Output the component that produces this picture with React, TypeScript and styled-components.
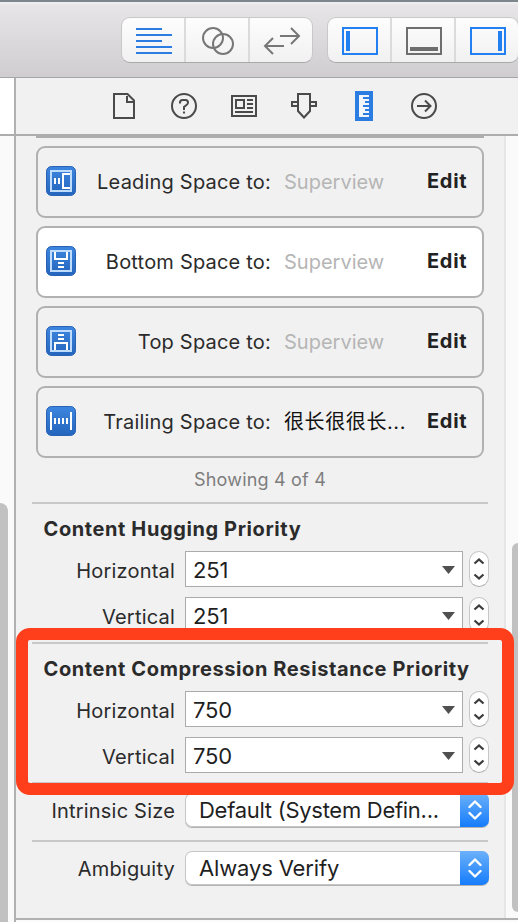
import React from "react";
import styled, { createGlobalStyle } from "styled-components";

const GlobalStyle = createGlobalStyle`
  * { box-sizing: border-box; }
  html, body { margin: 0; padding: 0; overflow: hidden; }
  body { font-family: Inter, "Noto Sans CJK SC", sans-serif; color: #2b2b2b; }
  svg { display: block; flex: none; }
`;

const Window = styled.div`
  position: relative;
  width: 518px;
  height: 922px;
  overflow: hidden;
  display: flex;
  flex-direction: column;
  background: #f1f1f1;
`;

const Toolbar = styled.header`
  height: 78px;
  flex: none;
  display: flex;
  gap: 14px;
  padding: 15px 0 0 121px;
  border-top: 2px solid #7b878d;
  border-bottom: 1px solid #a6a5a7;
  background: linear-gradient(#f3f2f3 0, #e7e5e7 3px, #cfcdd0 100%);
`;

const Segments = styled.div`
  flex: none;
  height: 46px;
  width: 192px;
  display: flex;
  border: 1px solid #c9c8c9;
  border-bottom-color: #aaa9aa;
  border-radius: 9px;
  overflow: hidden;
  background: linear-gradient(#fdfdfd, #f2f1f2);
`;

const Segment = styled.div`
  flex: 1;
  display: flex;
  align-items: center;
  justify-content: center;
  padding: 2px 0 0 2px;
  & + & { border-left: 2px solid #dcdbdc; }
`;

const TabRow = styled.nav`
  height: 58px;
  flex: none;
  display: flex;
  border-bottom: 2px solid #adadad;
`;

const Gutter = styled.div<{ $tone: string }>`
  width: 16px;
  flex: none;
  border-right: 2px solid #b1b1b1;
  background: ${(p) => p.$tone};
`;

const Tabs = styled.div`
  display: flex;
  padding-left: 78px;
`;

const Tab = styled.div`
  width: 60px;
  display: flex;
  align-items: center;
  justify-content: center;
`;

const Body = styled.div`
  flex: 1;
  display: flex;
  min-height: 0;
`;

const Thumb = styled.div<{ $top: number; $height: number; $width: number; $radius: string }>`
  width: ${(p) => p.$width}px;
  height: ${(p) => p.$height}px;
  margin-top: ${(p) => p.$top}px;
  border-radius: ${(p) => p.$radius};
  background: #c1c1c1;
`;

const Main = styled.div`
  flex: 1;
  display: flex;
  flex-direction: column;
`;

const Pane = styled.div`
  height: 784px;
  flex: none;
  display: flex;
  border-bottom: 2px solid #b1b1b1;
`;

const Footer = styled.div`
  flex: 1;
  background: #fbfbfb;
`;

const Inspector = styled.main`
  width: 488px;
  flex: none;
`;

const ScrollTrack = styled.div`
  flex: 1;
  display: flex;
  justify-content: flex-end;
  border-left: 2px solid #e6e6e6;
  background: #fafafa;
`;

const Constraints = styled.section`
  margin-left: 20px;
  width: 448px;
  display: flex;
  flex-direction: column;
  gap: 8px;
  border-top: 2px solid #adadad;
  padding-top: 8px;
`;

const Card = styled.div<{ $selected?: boolean }>`
  height: 72px;
  display: grid;
  grid-template-columns: 30px 195px 131px 1fr;
  align-items: center;
  padding: 0 0 2px 8px;
  border: 2px solid #b1b1b1;
  border-radius: 9px;
  background: ${(p) => (p.$selected ? "#fff" : "#f1f1f1")};
  font-size: 20px;
  line-height: 24px;
  white-space: nowrap;
`;

const Relation = styled.span`
  text-align: right;
  letter-spacing: 0.2px;
  padding-top: 2px;
`;

const Target = styled.span<{ $named?: boolean }>`
  padding: 2px 0 0 13px;
  letter-spacing: ${(p) => (p.$named ? "0.6px" : "0")};
  color: ${(p) => (p.$named ? "#111" : "#b5b5b5")};
`;

const Edit = styled.span`
  padding-left: 25px;
  font-weight: 700;
  color: #222;
  letter-spacing: 0.7px;
`;

const Count = styled.p`
  margin: 0 0 0 16px;
  height: 44px;
  padding-top: 10px;
  width: 456px;
  text-align: center;
  font-size: 18px;
  line-height: 24px;
  letter-spacing: 0.2px;
  color: #7d7d7d;
`;

const Group = styled.section<{ $height: number }>`
  margin-left: 16px;
  width: 457px;
  height: ${(p) => p.$height}px;
`;

const Rule = styled.div`
  height: 2px;
  width: 456px;
  background: #c8c8c8;
`;

const Heading = styled.h2`
  margin: 0;
  padding: 13px 0 0 11.5px;
  height: 47px;
  font-size: 20px;
  line-height: 24px;
  font-weight: 700;
  white-space: nowrap;
  letter-spacing: 0.6px;
`;

const Field = styled.div`
  height: 46px;
  display: flex;
`;

const FieldLabel = styled.label<{ $top?: number }>`
  width: 143px;
  margin-right: 10px;
  padding-top: ${(p) => p.$top ?? 8}px;
  text-align: right;
  font-size: 20px;
  line-height: 24px;
  letter-spacing: 0.2px;
  white-space: nowrap;
`;

const Combo = styled.div`
  width: 278px;
  height: 36px;
  display: flex;
  align-items: center;
  justify-content: space-between;
  padding: 2px 7px 0 7px;
  margin-right: 6px;
  border: 1px solid #ababab;
  background: #fff;
  font-size: 22px;
  letter-spacing: -0.2px;
  color: #1f1f1f;
`;

const Stepper = styled.div`
  width: 20px;
  height: 36px;
  display: flex;
  align-items: center;
  justify-content: center;
  border: 1px solid #c6c6c6;
  border-bottom-color: #aaa;
  border-radius: 10px;
  background: #fff;
`;

const Select = styled.div`
  width: 304px;
  height: 34px;
  display: flex;
  justify-content: space-between;
  border-radius: 7px;
  overflow: hidden;
  background: #fff;
  box-shadow: inset 0 0 0 1px #c6c6c6, 0 1px 0 #b3b3b3;
`;

const SelectText = styled.span<{ $spacing: number }>`
  padding-left: 14px;
  font-size: 22px;
  line-height: 34px;
  letter-spacing: ${(p) => p.$spacing}px;
  color: #1f1f1f;
  white-space: nowrap;
`;

const SelectButton = styled.span`
  width: 29px;
  display: flex;
  align-items: center;
  justify-content: center;
  background: linear-gradient(#6cb1fa, #157cfb);
`;

const Highlight = styled.div`
  position: absolute;
  left: 16px;
  top: 628px;
  width: 498px;
  height: 167px;
  border: 12px solid #ff3e1b;
  border-radius: 14px;
`;

const ink = "#4a4a4a";
const blue = "#2b7de1";

const AlignIcon = () => (
  <svg width="36" height="26" fill={blue}>
    <path d="M0 0h26v2H0zM0 6h36v2H0zM0 12h26v2H0zM0 18h36v2H0zM0 24h36v2H0z" />
  </svg>
);

const CirclesIcon = () => (
  <svg width="32" height="28" fill="none" stroke="#777" strokeWidth="2">
    <circle cx="11" cy="11" r="10" />
    <circle cx="21" cy="17" r="10" />
  </svg>
);

const ArrowsIcon = () => (
  <svg width="38" height="28" fill="none" stroke="#777" strokeWidth="2">
    <path d="M17 9h18M28 1l8 8-8 8M21 19H3M10 11l-8 8 8 8" />
  </svg>
);

const PanelIcon = ({ color, bar }: { color: string; bar: string }) => (
  <svg width="36" height="28" fill={color}>
    <path fillRule="evenodd" d="M0 0h36v28H0zM2 2v24h32V2z" />
    <path d={bar} />
  </svg>
);

const FileIcon = () => (
  <svg width="22" height="26" fill="none" stroke={ink} strokeWidth="2">
    <path d="M1 1h13.5L21 7.500V25H1z" />
    <path d="M14 3v6h6" />
  </svg>
);

const HelpIcon = () => (
  <svg width="26" height="26" fill="none" stroke={ink} strokeWidth="2">
    <circle cx="13" cy="13" r="12" />
    <path d="M9 10.500V9.500Q9 7 11.500 7H14.500Q17 7 17 9.500Q17 11 15.500 12L13 14v3M13 18.500v2" />
  </svg>
);

const IdentityIcon = () => (
  <svg width="26" height="22" fill="none" stroke={ink} strokeWidth="2">
    <path d="M1 1h24v20H1zM5 5h8v8H5zM16 5h6M16 9h6M16 13h6M4 17h18" />
  </svg>
);

const AttributesIcon = () => (
  <svg width="26" height="26" fill="none" stroke={ink} strokeWidth="2">
    <path d="M7 1h12v17l-6 6.500-6-6.500zM7 9H1v4h6M19 9h6v4h-6" />
  </svg>
);

const RulerIcon = () => (
  <svg width="18" height="30">
    <path d="M0 0h18v30H0z" fill={blue} />
    <path d="M4 4h10v22H4z" fill="#f1f6fc" />
    <path d="M8 6h6v2H8zM10 10h4v2h-4zM8 14h6v2H8zM10 18h4v2h-4zM8 22h6v2H8z" fill={blue} />
  </svg>
);

const ConnectionsIcon = () => (
  <svg width="26" height="26" fill="none" stroke={ink} strokeWidth="2">
    <circle cx="13" cy="13" r="12" />
    <path d="M6 13h13M14 7.500l5.500 5.500-5.500 5.500" />
  </svg>
);

type Kind = "leading" | "bottom" | "top" | "trailing";

const glyphs: Record<Kind, string> = {
  leading: "M24 8H17V22H24M9 12v6M13 12v6",
  bottom: "M9 6v7h12V6M12 17h6M12 21h6",
  top: "M9 24v-7h12v7M12 9h6M12 13h6",
  trailing: "M5 6v18M25 6v18M9 12v6M13 12v6M17 12v6M21 12v6",
};

const ConstraintIcon = ({ kind }: { kind: Kind }) => (
  <svg width="30" height="30" fill="none">
    <defs>
      <linearGradient id={`tile-${kind}`} x1="0" y1="0" x2="0" y2="1">
        <stop offset="0" stopColor="#3d86df" />
        <stop offset="1" stopColor="#2465bd" />
      </linearGradient>
    </defs>
    <rect x="0.500" y="0.500" width="29" height="29" rx="5" fill={`url(#tile-${kind})`} stroke="#2962b4" />
    {kind !== "trailing" && <path d="M5 5h20v20H5z" stroke="#bfdcff" strokeWidth="2" />}
    <path d={glyphs[kind]} stroke="#fff" strokeWidth="2" />
  </svg>
);

const StepperArrows = () => (
  <svg width="12" height="24" fill="none" stroke="#3d3d3d" strokeWidth="2.300">
    <path d="M1.500 6.500L6 2.500l4.500 4M1.500 17.500L6 21.500l4.500-4" />
  </svg>
);

const DropArrow = () => (
  <svg width="13" height="8">
    <path d="M0 0h13L6.500 8z" fill="#505050" />
  </svg>
);

const SelectArrows = () => (
  <svg width="14" height="22" fill="none" stroke="#fff" strokeWidth="2.400" strokeLinecap="round" strokeLinejoin="round">
    <path d="M1.500 8L7 2.500l5.500 5.500M1.500 14L7 19.500l5.500-5.500" />
  </svg>
);

const constraints: { kind: Kind; label: string; target: string; selected?: boolean; named?: boolean }[] = [
  { kind: "leading", label: "Leading Space to:", target: "Superview" },
  { kind: "bottom", label: "Bottom Space to:", target: "Superview", selected: true },
  { kind: "top", label: "Top Space to:", target: "Superview" },
  { kind: "trailing", label: "Trailing Space to:", target: "很长很很长...", named: true },
];

const PriorityField = ({ label, value }: { label: string; value: string }) => (
  <Field>
    <FieldLabel>{label}</FieldLabel>
    <Combo>
      {value}
      <DropArrow />
    </Combo>
    <Stepper>
      <StepperArrows />
    </Stepper>
  </Field>
);

const SelectField = ({ label, value, spacing }: { label: string; value: string; spacing: number }) => (
  <Field>
    <FieldLabel $top={6}>{label}</FieldLabel>
    <Select>
      <SelectText $spacing={spacing}>{value}</SelectText>
      <SelectButton>
        <SelectArrows />
      </SelectButton>
    </Select>
  </Field>
);

const SelectGroup = styled(Group)`
  ${Rule} { margin-bottom: 9px; }
`;

export default function App() {
  return (
    <Window>
      <GlobalStyle />
      <Toolbar>
        <Segments>
          <Segment><AlignIcon /></Segment>
          <Segment><CirclesIcon /></Segment>
          <Segment><ArrowsIcon /></Segment>
        </Segments>
        <Segments>
          <Segment><PanelIcon color="#2380f0" bar="M4 4h4v20H4z" /></Segment>
          <Segment><PanelIcon color="#6e6e6e" bar="M4 20h28v4H4z" /></Segment>
          <Segment><PanelIcon color="#2380f0" bar="M28 4h4v20h-4z" /></Segment>
        </Segments>
      </Toolbar>
      <TabRow>
        <Gutter $tone="#fff" />
        <Tabs>
          <Tab><FileIcon /></Tab>
          <Tab><HelpIcon /></Tab>
          <Tab><IdentityIcon /></Tab>
          <Tab><AttributesIcon /></Tab>
          <Tab><RulerIcon /></Tab>
          <Tab><ConnectionsIcon /></Tab>
        </Tabs>
      </TabRow>
      <Body>
        <Gutter $tone="#fafafa">
          <Thumb $top={367} $height={430} $width={8} $radius="0 8px 0 0" />
        </Gutter>
        <Main>
          <Pane>
            <Inspector>
              <Constraints>
                {constraints.map((c) => (
                  <Card key={c.kind} $selected={c.selected}>
                    <ConstraintIcon kind={c.kind} />
                    <Relation>{c.label}</Relation>
                    <Target $named={c.named}>{c.target}</Target>
                    <Edit>Edit</Edit>
                  </Card>
                ))}
              </Constraints>
              <Count>Showing 4 of 4</Count>
              <Group $height={140}>
                <Rule />
                <Heading>Content Hugging Priority</Heading>
                <PriorityField label="Horizontal" value="251" />
                <PriorityField label="Vertical" value="251" />
              </Group>
              <Group $height={140}>
                <Rule />
                <Heading>Content Compression Resistance Priority</Heading>
                <PriorityField label="Horizontal" value="750" />
                <PriorityField label="Vertical" value="750" />
              </Group>
              <SelectGroup $height={58}>
                <Rule />
                <SelectField label="Intrinsic Size" value="Default (System Defin..." spacing={-0.28} />
              </SelectGroup>
              <SelectGroup $height={78}>
                <Rule />
                <SelectField label="Ambiguity" value="Always Verify" spacing={-0.15} />
              </SelectGroup>
            </Inspector>
            <ScrollTrack>
              <Thumb $top={407} $height={369} $width={6} $radius="6px 0 0 6px" />
            </ScrollTrack>
          </Pane>
          <Footer />
        </Main>
      </Body>
      <Highlight />
    </Window>
  );
}
